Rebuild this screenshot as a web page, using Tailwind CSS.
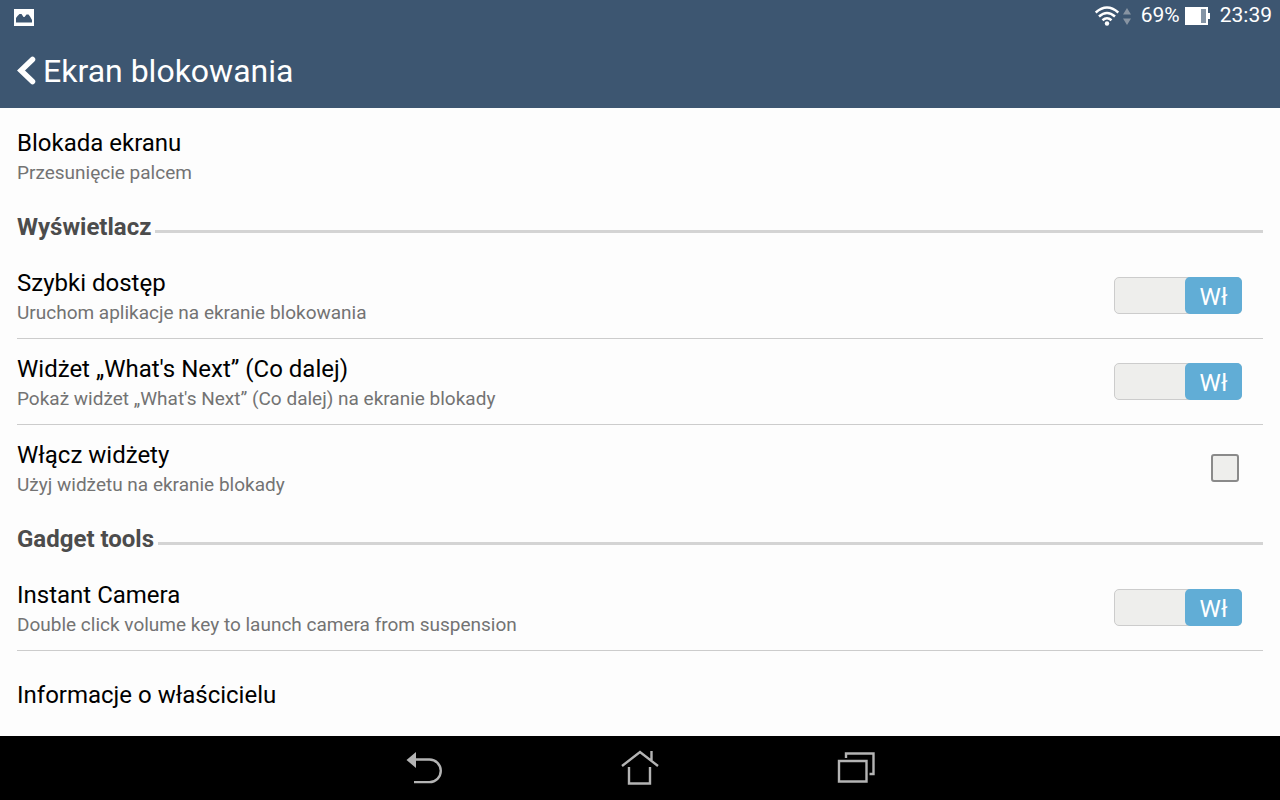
<!DOCTYPE html>
<html lang="pl">
<head>
    <meta charset="UTF-8">
    <meta name="viewport" content="width=device-width, initial-scale=1.0">
    <title>Ekran blokowania</title>
    <script src="https://cdn.jsdelivr.net/npm/@tailwindcss/browser@4"></script>
</head>
<body class="min-h-screen flex flex-col bg-[#fdfdfd] font-['Roboto','Noto_Sans',sans-serif] text-black">
    <header class="bg-[#3d5671] text-white">
        <!-- Status bar -->
        <div class="flex items-center justify-between h-8 pl-3 pr-2">
            <svg class="w-6 h-6" viewBox="0 0 24 24" aria-label="Zrzut ekranu">
                <path fill="#fff" fill-rule="evenodd" d="M2 5h20v17H2zM4 18.500h16V16l-2-3.500-1.500-2h-2L12.500 13h-1L9.500 10h-2L5.500 12 4 14z"/>
            </svg>
            <div class="flex items-center text-[21px]">
                <svg class="w-6 h-6" viewBox="0 0 24 24" fill="none" stroke="#fff" stroke-width="2.600" aria-label="Wi-Fi">
                    <path d="M.700 8.500Q12 -1.500 23.300 8.500M4 12.500Q12 5.500 20 12.500M7.500 16.200Q12 12.300 16.500 16.200"/>
                    <circle cx="12" cy="19.500" r="2.200" fill="#fff" stroke="none"/>
                </svg>
                <svg class="w-2 h-6 ml-1" viewBox="0 0 8 24" fill="#8894a2" aria-hidden="true">
                    <path d="M0 10.500L4 4l4 6.500zM0 14.500h8L4 21z"/>
                </svg>
                <span class="ml-[10px]">69%</span>
                <svg class="w-7 h-5 ml-1" viewBox="0 0 28 20" aria-hidden="true">
                    <path fill="#fff" d="M1 1h23v6h2v6h-2v6H1z"/>
                    <path fill="#8494a5" d="M17 3h5v14h-5z"/>
                </svg>
                <span class="ml-2">23:39</span>
            </div>
        </div>
        <!-- Title bar -->
        <div class="flex items-center h-19 pt-0.5 pl-4">
            <a href="#" class="flex items-center" aria-label="Wstecz">
                <svg class="w-6 h-8" viewBox="0 0 24 32" fill="none" stroke="#fff" stroke-width="5.500" stroke-linecap="round">
                    <path d="M16.500 4.500L5 15.500l11.500 11"/>
                </svg>
            </a>
            <h1 class="ml-[3px] text-[32px] leading-10">Ekran blokowania</h1>
        </div>
    </header>

    <main class="flex-1 px-4 pt-[5px]">
        <a href="#" class="flex items-center h-[86px] px-px">
            <div class="pt-0.5">
                <h3 class="text-2xl leading-8">Blokada ekranu</h3>
                <p class="text-[19px] leading-7 text-[#737373]">Przesunięcie palcem</p>
            </div>
        </a>

        <section>
            <div class="flex items-center h-[54px] pt-0.5 px-px">
                <h2 class="text-2xl font-bold text-[#4c4c4c]">Wyświetlacz</h2>
                <div class="flex-1 h-[3px] ml-1 mt-2 bg-[#d4d4d4]"></div>
            </div>
            <div class="flex items-center justify-between h-[86px] mx-px pr-[21px] border-b border-[#cccccc]">
                <div class="pt-0.5">
                    <h3 id="quick" class="text-2xl leading-8">Szybki dostęp</h3>
                    <p class="text-[19px] leading-7 text-[#737373]">Uruchom aplikacje na ekranie blokowania</p>
                </div>
                <button type="button" role="switch" aria-checked="true" aria-labelledby="quick" class="flex justify-end w-32 h-[37px] rounded-[5px] bg-[#eeeeec] border border-[#cccccc]">
                    <span class="-m-px w-[57px] h-[37px] rounded-[5px] bg-[#61add6] text-white text-2xl leading-10">Wł</span>
                </button>
            </div>
            <div class="flex items-center justify-between h-[86px] mx-px pr-[21px] border-b border-[#cccccc]">
                <div class="pt-0.5">
                    <h3 id="next" class="text-2xl leading-8">Widżet „What's Next” (Co dalej)</h3>
                    <p class="text-[19px] leading-7 text-[#737373]">Pokaż widżet „What's Next” (Co dalej) na ekranie blokady</p>
                </div>
                <button type="button" role="switch" aria-checked="true" aria-labelledby="next" class="flex justify-end w-32 h-[37px] rounded-[5px] bg-[#eeeeec] border border-[#cccccc]">
                    <span class="-m-px w-[57px] h-[37px] rounded-[5px] bg-[#61add6] text-white text-2xl leading-10">Wł</span>
                </button>
            </div>
            <label for="widgets" class="flex items-center justify-between h-[86px] mx-px pr-6">
                <span class="pt-0.5">
                    <span class="block text-2xl leading-8">Włącz widżety</span>
                    <span class="block text-[19px] leading-7 text-[#737373]">Użyj widżetu na ekranie blokady</span>
                </span>
                <input id="widgets" type="checkbox" class="appearance-none w-7 h-7 rounded-[3px] border-2 border-[#8a8a8a] bg-[#eeeeec] checked:bg-[#61add6]">
            </label>
        </section>

        <section>
            <div class="flex items-center h-[54px] pt-0.5 px-px">
                <h2 class="text-2xl font-bold text-[#4c4c4c]">Gadget tools</h2>
                <div class="flex-1 h-[3px] ml-1 mt-2 bg-[#d4d4d4]"></div>
            </div>
            <div class="flex items-center justify-between h-[86px] mx-px pr-[21px] border-b border-[#cccccc]">
                <div class="pt-0.5">
                    <h3 id="camera" class="text-2xl leading-8">Instant Camera</h3>
                    <p class="text-[19px] leading-7 text-[#737373]">Double click volume key to launch camera from suspension</p>
                </div>
                <button type="button" role="switch" aria-checked="true" aria-labelledby="camera" class="flex justify-end w-32 h-[37px] rounded-[5px] bg-[#eeeeec] border border-[#cccccc]">
                    <span class="-m-px w-[57px] h-[37px] rounded-[5px] bg-[#61add6] text-white text-2xl leading-10">Wł</span>
                </button>
            </div>
            <a href="#" class="flex items-center h-[85px] px-px">
                <h3 class="pt-0.5 text-2xl leading-8">Informacje o właścicielu</h3>
            </a>
        </section>
    </main>

    <!-- System navigation -->
    <nav class="flex items-center justify-center gap-44 h-16 bg-black">
        <button type="button" aria-label="Wstecz">
            <svg class="w-10 h-10" viewBox="0 0 40 40" fill="none" stroke="#b4b4b4" stroke-width="2.400">
                <path d="M10 11.500h15.500a11.300 11.300 0 0 1 0 22.600H10"/>
                <path fill="#b4b4b4" stroke="none" d="M2.500 12L12 4v16z"/>
            </svg>
        </button>
        <button type="button" aria-label="Ekran główny">
            <svg class="w-10 h-10" viewBox="0 0 40 40" fill="none" stroke="#b4b4b4" stroke-width="2.400">
                <path d="M2 18L20 4l18 14M31.500 3v9M9 19v16.500h21V19"/>
            </svg>
        </button>
        <button type="button" aria-label="Ostatnie aplikacje">
            <svg class="w-10 h-10" viewBox="0 0 40 40" fill="none" stroke="#b4b4b4" stroke-width="2.400">
                <path d="M3 13h27.500v20.500H3zM10 10V5.500h27.500V26h-4"/>
            </svg>
        </button>
    </nav>
</body>
</html>
